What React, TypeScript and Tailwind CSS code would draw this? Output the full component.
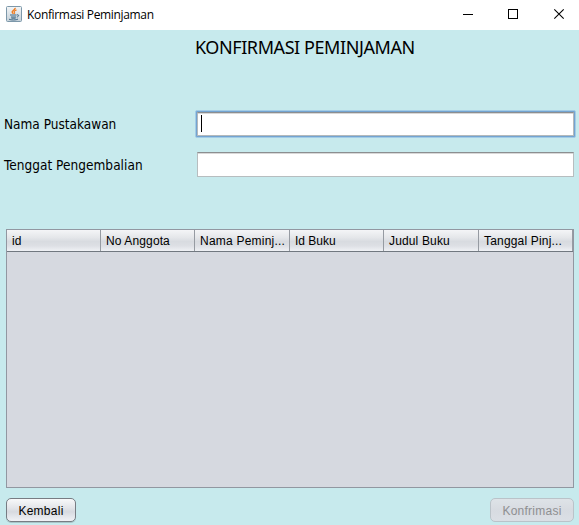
const columns = [
  { label: 'id', cls: 'w-[94px] tracking-[0.1px]' },
  { label: 'No Anggota', cls: 'w-[94px] tracking-[0.12px]' },
  { label: 'Nama Peminj...', cls: 'w-[95px] tracking-[0.22px]' },
  { label: 'Id Buku', cls: 'w-[94px] tracking-[0px]' },
  { label: 'Judul Buku', cls: 'w-[95px] tracking-[0.15px]' },
  { label: 'Tanggal Pinj...', cls: 'w-[94px] tracking-[0.18px]' },
];

function JavaIcon() {
  return (
    <svg width="16" height="16" viewBox="0 0 16 16" fill="none">
      <defs>
        <linearGradient id="tile" x1="0" y1="0" x2="0" y2="1">
          <stop offset="0" stopColor="#f4f6f7" />
          <stop offset="1" stopColor="#c4d0d8" />
        </linearGradient>
      </defs>
      <rect x="0.5" y="0.5" width="15" height="15" rx="1" fill="url(#tile)" stroke="#7d98aa" />
      <path d="M9.2 1.8C9.5 4 6 4.4 6.2 6c.1.9 1 1.2 1.2 1.8" stroke="#ef7d22" strokeWidth="1.5" />
      <path d="M10.6 3.9C8.5 4.6 7.9 5.2 8.5 6.2c.4.6.2 1-.3 1.6" stroke="#ef7d22" strokeWidth="1.1" />
      <path d="M4 9h6.6M5 11h5M5.4 12.2h4.2M11 8.9c2.2-.6 2.2 1.6-.2 2.2M3 13.2c1.8 1.1 7.3 1 9-.1" stroke="#3f6885" strokeWidth="1" />
    </svg>
  );
}

export default function App() {
  return (
    <div className="flex h-[525px] w-[579px] flex-col overflow-hidden bg-[#c7eaed] font-['Liberation_Sans',Arial,sans-serif] text-black">
      <header className="flex h-[30px] shrink-0 items-start bg-white pl-[6px]">
        <div className="mt-[6px]">
          <JavaIcon />
        </div>
        <span className="mt-[7px] ml-[5px] whitespace-nowrap font-['Open_Sans',sans-serif] text-[12px] leading-[16px] tracking-[-0.34px]">
          Konfirmasi Peminjaman
        </span>
        <svg className="ml-auto" width="124" height="30" viewBox="0 0 124 30" fill="none" stroke="#000">
          <path d="M8 14.5h10M53.5 9.5h9v9h-9z" shapeRendering="crispEdges" />
          <path d="M99.3 9.3l9.4 9.4M108.7 9.3l-9.4 9.4" strokeWidth="1.1" />
        </svg>
      </header>

      <h1 className="mt-[5px] h-[24px] pl-[195px] font-['Noto_Sans',sans-serif] text-[18px] leading-[24px] tracking-[-0.42px] whitespace-nowrap">
        KONFIRMASI PEMINJAMAN
      </h1>

      <div className="mt-[51px] flex h-[28px] items-center">
        <label className="w-[195px] pl-[4px] font-['DejaVu_Sans_Condensed','DejaVu_Sans',sans-serif] text-[13.5px] leading-[20px] tracking-[0px] [font-stretch:condensed] whitespace-nowrap">
          Nama Pustakawan
        </label>
        <div className="h-[28px] w-[381px] rounded-[2px] border border-[#a3cce6] bg-[#73a4d1] p-px">
          <div className="flex h-[24px] w-[377px] items-start border border-[#b4b9bb] border-t-[#8c8e90] bg-white pt-[2px] pl-[3px] shadow-[inset_0_1px_0_#d8d8d8]">
            <span className="h-[17px] w-px bg-black" />
          </div>
        </div>
      </div>

      <div className="mt-[14px] flex h-[25px] items-center">
        <label className="w-[197px] pl-[4px] font-['DejaVu_Sans_Condensed','DejaVu_Sans',sans-serif] text-[13.5px] leading-[20px] tracking-[0.04px] [font-stretch:condensed] whitespace-nowrap">
          Tenggat Pengembalian
        </label>
        <div className="h-[25px] w-[377px] border border-[#b7bdbf] border-t-[#8c8e90] bg-white shadow-[inset_0_1px_0_#d8d8d8]" />
      </div>

      <section className="mt-[52px] ml-[6px] h-[259px] w-[568px] shrink-0 border border-[#9297a1] bg-[#d6d9e0]">
        <div className="flex h-[22px] border-b border-[#717880] bg-[linear-gradient(#f4f5f7_0%,#e5e7ea_35%,#d8dbe0_55%,#dddfe4_75%,#eff1f5_100%)]">
          {columns.map((column) => (
            <div
              key={column.label}
              className={`flex h-[21px] shrink-0 items-center border-r border-[#969ba2] pl-[5px] text-[12px] leading-[14px] whitespace-nowrap ${column.cls}`}
            >
              {column.label}
            </div>
          ))}
        </div>
      </section>

      <footer className="mt-[10px] flex h-[24px] shrink-0 justify-between pr-[5px] pl-[6px] text-[12px] leading-[14px]">
        <button className="h-[24px] w-[70px] rounded-[5px] border border-[#777c83] bg-[linear-gradient(#f8f9fa_0%,#e3e5e9_40%,#d7dae0_58%,#f0f2f6_100%)] pt-px tracking-[0.25px] shadow-[0_1px_0_#a8c5c8]">
          Kembali
        </button>
        <button className="h-[24px] w-[84px] rounded-[5px] border border-[#bac3c9] bg-[linear-gradient(#dee3e7_0%,#d7dbe1_50%,#dbdfe5_100%)] pt-px tracking-[0.25px] text-[#8e8f91]">
          Konfrimasi
        </button>
      </footer>
    </div>
  );
}
